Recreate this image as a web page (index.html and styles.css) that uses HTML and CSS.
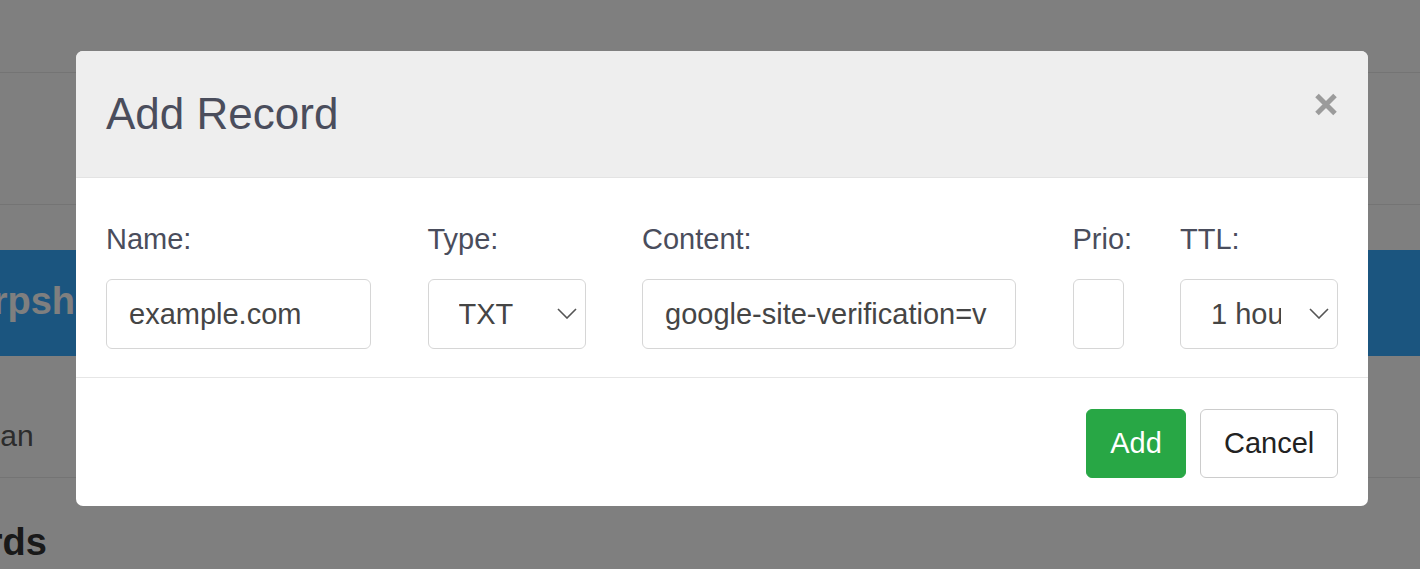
FILE: index.html
```html
<!DOCTYPE html>
<html lang="en">
<head>
    <meta charset="UTF-8">
    <meta name="viewport" content="width=device-width, initial-scale=1.0">
    <title>DNS Records - Add Record</title>
    <link rel="stylesheet" href="styles.css">
</head>
<body>

<!-- Page behind the dialog -->
<div class="page">
    <nav class="topbar"></nav>
    <div class="subbar"></div>
    <div class="banner">
        <h1>Sharpshooter</h1>
    </div>
    <div class="plan-row">
        <p>Free plan</p>
    </div>
    <h2 class="records-title">DNS Records</h2>
</div>

<div class="backdrop"></div>

<!-- Add record dialog -->
<div class="modal">
    <div class="modal-header">
        <h4>Add Record</h4>
        <button class="close" type="button" aria-label="Close">
            <svg width="24" height="23" viewBox="0 0 24 23">
                <path d="M3 2.5L21 20.5M21 2.5L3 20.5" stroke="#9b9b9b" stroke-width="5" fill="none"/>
            </svg>
        </button>
    </div>

    <div class="modal-body">
        <div class="fields">
            <div class="field field-name">
                <label for="recName">Name:</label>
                <input type="text" id="recName" value="example.com">
            </div>
            <div class="field field-type">
                <label for="recType">Type:</label>
                <div class="select-wrap">
                    <select id="recType">
                        <option>A</option>
                        <option>AAAA</option>
                        <option>CNAME</option>
                        <option>MX</option>
                        <option selected>TXT</option>
                    </select>
                    <svg class="chevron" width="20" height="11" viewBox="0 0 20 11">
                        <polyline points="1,1 10,10 19,1" fill="none" stroke="#555" stroke-width="1.6"/>
                    </svg>
                </div>
            </div>
            <div class="field field-content">
                <label for="recContent">Content:</label>
                <input type="text" id="recContent" value="google-site-verification=v">
            </div>
            <div class="field field-prio">
                <label for="recPrio">Prio:</label>
                <input type="text" id="recPrio" value="">
            </div>
            <div class="field field-ttl">
                <label for="recTtl">TTL:</label>
                <div class="select-wrap">
                    <select id="recTtl">
                        <option>5 minutes</option>
                        <option selected>1 hour</option>
                        <option>1 day</option>
                    </select>
                    <svg class="chevron" width="20" height="11" viewBox="0 0 20 11">
                        <polyline points="1,1 10,10 19,1" fill="none" stroke="#555" stroke-width="1.6"/>
                    </svg>
                </div>
            </div>
        </div>
    </div>

    <div class="modal-footer">
        <button class="btn btn-add" type="button">Add</button>
        <button class="btn btn-cancel" type="button">Cancel</button>
    </div>
</div>

</body>
</html>
```

FILE: styles.css
```css
* {
    box-sizing: border-box;
}
body {
    margin: 0;
    height: 569px;
    overflow: hidden;
    font-family: "Liberation Sans", Arial, sans-serif;
    background-color: #fff;
}

/* page behind the dialog */
.topbar {
    height: 73px;
    border-bottom: 1px solid #e9e9e9;
}
.subbar {
    height: 132px;
    border-bottom: 1px solid #e9e9e9;
}
.banner {
    margin-top: 45px;
    height: 106px;
    background-color: #36aaff;
}
.banner h1 {
    margin: 0 0 0 -77px;
    font-size: 38px;
    line-height: 102px;
    font-weight: bold;
    color: #fff;
    white-space: nowrap;
}
.plan-row {
    height: 122px;
    padding-top: 62px;
    border-bottom: 1px solid #e9e9e9;
}
.plan-row p {
    margin: 0 0 0 -93px;
    font-size: 30px;
    line-height: 36px;
    color: #585858;
}
.records-title {
    margin: 41px 0 0 -196px;
    font-size: 38px;
    line-height: 46px;
    color: #333;
    white-space: nowrap;
}

.backdrop {
    position: fixed;
    top: 0;
    left: 0;
    width: 100%;
    height: 100%;
    background-color: rgba(0, 0, 0, 0.5);
}

/* dialog */
.modal {
    position: fixed;
    top: 51px;
    left: 76px;
    width: 1292px;
    background-color: #fff;
    border-radius: 7px;
    overflow: hidden;
}
.modal-header {
    display: flex;
    justify-content: space-between;
    align-items: flex-start;
    padding: 36px 30px 37px;
    background-color: #eee;
    border-bottom: 1px solid #e3e3e3;
}
.modal-header h4 {
    margin: 0;
    font-size: 44px;
    line-height: 53px;
    font-weight: normal;
    color: #4a4d5c;
}
.close {
    margin-top: 6px;
    padding: 0;
    border: none;
    background: none;
    line-height: 0;
    cursor: pointer;
}

.modal-body {
    padding: 40px 30px 28px;
}
.fields {
    display: flex;
    justify-content: space-between;
}
.field label {
    display: block;
    margin-bottom: 18px;
    font-size: 29px;
    line-height: 43px;
    color: #4a4d5c;
}
.field input,
.field select {
    display: block;
    width: 100%;
    height: 70px;
    padding: 0 22px;
    font-family: inherit;
    font-size: 29px;
    color: #454545;
    background-color: #fff;
    border: 1px solid #d6d6d6;
    border-radius: 6px;
    outline: none;
}
.field select {
    appearance: none;
    -webkit-appearance: none;
    padding: 0 56px 0 30px;
}
.select-wrap {
    position: relative;
}
.chevron {
    position: absolute;
    right: 9px;
    top: 29px;
    pointer-events: none;
}
.field-name {
    width: 265px;
}
.field-type {
    width: 158px;
}
.field-content {
    width: 374px;
}
.field-prio {
    width: 51px;
}
.field-ttl {
    width: 158px;
}

.modal-footer {
    display: flex;
    justify-content: flex-end;
    gap: 14px;
    padding: 31px 30px 28px;
    border-top: 1px solid #e6e6e6;
}
.btn {
    height: 69px;
    padding: 0 23px;
    font-family: inherit;
    font-size: 29px;
    border-radius: 6px;
    cursor: pointer;
}
.btn-add {
    width: 100px;
    color: #fff;
    background-color: #28a745;
    border: 1px solid #28a745;
}
.btn-cancel {
    width: 138px;
    color: #222;
    background-color: #fff;
    border: 1px solid #ccc;
}
```
